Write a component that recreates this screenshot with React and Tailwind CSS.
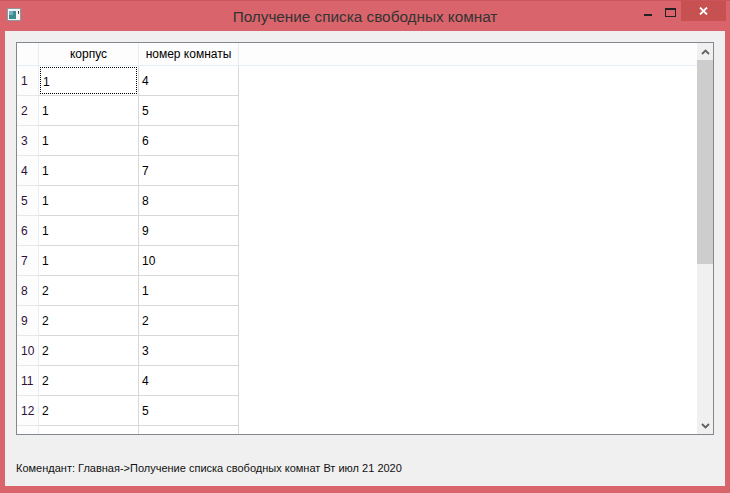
import React from "react";

const rows = [
  [1, 4], [1, 5], [1, 6], [1, 7], [1, 8], [1, 9], [1, 10],
  [2, 1], [2, 2], [2, 3], [2, 4], [2, 5], ["", ""],
];

const font = { fontFamily: '"Liberation Sans", Arial, sans-serif' };

const App = () => {
  return (
    <div className="w-[730px] h-[493px] bg-[#d9646b] flex flex-col border-t border-[#c9545b]" style={font}>
      {/* title bar */}
      <div className="h-[30px] flex items-start relative">
        <div className="absolute left-[7px] top-[7px]">
          <svg width="14" height="13" viewBox="0 0 14 13">
            <rect x="0.5" y="0.5" width="13" height="12" fill="#f4f4f4" stroke="#8a9aa0" />
            <rect x="2" y="3" width="7" height="8" fill="#3d8c8c" />
            <rect x="2" y="3" width="4" height="4" fill="#6fb2c8" />
            <rect x="11" y="3" width="1" height="3" fill="#404040" />
          </svg>
        </div>
        <div className="flex-1 text-center text-[15.3px] text-[#333] leading-[30px] pt-[1px]">
          Получение списка свободных комнат
        </div>
        <div className="absolute right-[4px] top-0 flex items-start">
          <div className="w-[23px] h-[20px] flex items-center justify-center">
            <div className="w-[8px] h-[2px] bg-[#222] mt-[7px]" />
          </div>
          <div className="w-[22px] h-[20px] flex items-center justify-center">
            <div className="w-[11px] h-[9px] border border-[#222] border-t-2 mt-[2px]" />
          </div>
          <div className="w-[45px] h-[20px] bg-[#c75050] flex items-center justify-center">
            <svg width="9" height="8" viewBox="0 0 9 8">
              <path d="M1 0.5 L8 7.5 M8 0.5 L1 7.5" stroke="#fff" strokeWidth="1.8" />
            </svg>
          </div>
        </div>
      </div>

      {/* client area */}
      <div className="mx-[5px] mb-[7px] flex-1 bg-[#f0f0f0] flex flex-col px-[11px] pt-[11px]">
        <div className="h-[393px] border border-[#828790] bg-white flex">
          <div className="flex-1 overflow-hidden text-[12px] text-black">
            {/* header */}
            <div className="flex h-[23px] bg-[#fdfdfd] border-b border-[#e6edf6]">
              <div className="w-[22px] border-r border-[#e6edf6]" />
              <div className="w-[100px] border-r border-[#e6edf6] text-center leading-[22px]">корпус</div>
              <div className="w-[100px] border-r border-[#e6edf6] text-center leading-[22px]">номер комнаты</div>
            </div>
            {rows.map((r, i) => (
              <div key={i} className="flex h-[30px]">
                <div className="w-[22px] border-r border-b border-r-[#e6edf6] border-b-[#e8e8e8] bg-[#fdfdfd] pl-[4px] leading-[30px] text-[#30103a]">
                  {r[0] === "" ? "" : i + 1}
                </div>
                <div className="w-[100px] border-r border-b border-[#d8d8d8] p-[1px]">
                  <div className={`h-full pl-[2px] leading-[28px] ${i === 0 ? "border border-dotted border-black leading-[26px] pl-[1px]" : ""}`}>
                    {r[0]}
                  </div>
                </div>
                <div className="w-[100px] border-r border-b border-[#d8d8d8] pl-[3px] leading-[30px]">{r[1]}</div>
              </div>
            ))}
          </div>
          {/* scrollbar */}
          <div className="w-[16px] bg-[#f0f0f0] flex flex-col">
            <div className="h-[17px] flex items-center justify-center">
              <svg width="9" height="6" viewBox="0 0 9 6">
                <path d="M1 5 L4.5 1.5 L8 5" stroke="#606060" strokeWidth="1.8" fill="none" />
              </svg>
            </div>
            <div className="h-[204px] bg-[#cdcdcd]" />
            <div className="flex-1" />
            <div className="h-[17px] flex items-center justify-center">
              <svg width="9" height="6" viewBox="0 0 9 6">
                <path d="M1 1 L4.5 4.5 L8 1" stroke="#606060" strokeWidth="1.8" fill="none" />
              </svg>
            </div>
          </div>
        </div>
        <div className="flex-1 flex items-center text-[11px] text-[#111] pt-[16px]">
          Комендант: Главная-&gt;Получение списка свободных комнат Вт июл 21 2020
        </div>
      </div>
    </div>
  );
};

export default App;
